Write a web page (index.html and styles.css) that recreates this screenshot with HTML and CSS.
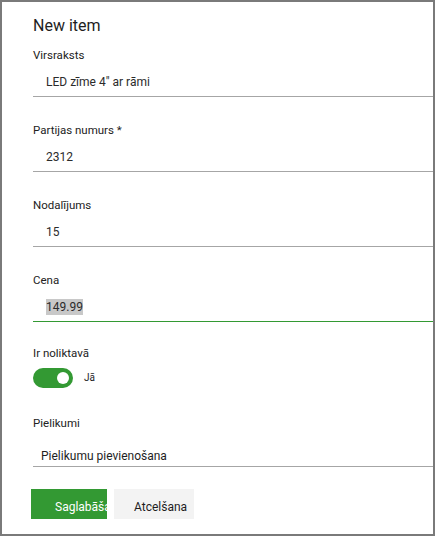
FILE: index.html
```html
<!DOCTYPE html>
<html lang="lv">
<head>
<meta charset="utf-8">
<title>New item</title>
<link rel="stylesheet" href="styles.css">
</head>
<body>
<div class="panel">
  <h1 class="title">New item</h1>

  <div class="field first">
    <div class="label">Virsraksts</div>
    <div class="value">LED zīme 4" ar rāmi</div>
  </div>

  <div class="field">
    <div class="label">Partijas numurs *</div>
    <div class="value">2312</div>
  </div>

  <div class="field">
    <div class="label">Nodalījums</div>
    <div class="value">15</div>
  </div>

  <div class="field focused">
    <div class="label">Cena</div>
    <div class="value"><span class="selected">149.99</span></div>
  </div>

  <div class="toggle-field">
    <div class="label">Ir noliktavā</div>
    <div class="toggle-row">
      <span class="toggle"><span class="knob"></span></span>
      <span class="toggle-text">Jā</span>
    </div>
  </div>

  <div class="field attach">
    <div class="label">Pielikumi</div>
    <div class="value">Pielikumu pievienošana</div>
  </div>

  <div class="actions">
    <button class="btn primary">Saglabāšana</button>
    <button class="btn secondary">Atcelšana</button>
  </div>
</div>
</body>
</html>
```

FILE: styles.css
```css
html, body {
  margin: 0;
  padding: 0;
  background: #ffffff;
}

body {
  font-family: Roboto, "Liberation Sans", Arial, sans-serif;
  color: #252525;
}

.panel {
  box-sizing: border-box;
  width: 435px;
  height: 536px;
  border: 2px solid #7a7a7a;
  padding: 12.5px 0 0 31px;
  overflow: hidden;
}

.title {
  margin: 0;
  font-size: 16px;
  line-height: 22px;
  font-weight: 400;
  color: #1e1e1e;
}

.field {
  padding-top: 25px;
  border-bottom: 1px solid #a6a6a6;
}

.field.first {
  padding-top: 10.5px;
}

.field.focused {
  border-bottom-color: #339933;
}

.label {
  font-size: 11.5px;
  line-height: 16px;
  color: #222222;
  margin-bottom: 9px;
}

.value {
  font-size: 12px;
  line-height: 20px;
  padding: 0 0 4px 13px;
  color: #2b2b2b;
}

.selected {
  display: inline-block;
  background: #c8c8c8;
  line-height: 16px;
}

.toggle-field {
  padding-top: 22.5px;
}

.toggle-field .label {
  margin-bottom: 7px;
}

.toggle-row {
  display: flex;
  align-items: center;
  height: 20px;
}

.toggle {
  position: relative;
  display: block;
  width: 40px;
  height: 20px;
  border-radius: 10px;
  background: #339933;
}

.knob {
  position: absolute;
  top: 4px;
  right: 4px;
  width: 12px;
  height: 12px;
  border-radius: 50%;
  background: #ffffff;
}

.toggle-text {
  margin-left: 11px;
  font-size: 10px;
  color: #1e1e1e;
}

.field.attach {
  padding-top: 27.5px;
}

.field.attach .label {
  margin-bottom: 15px;
}

.field.attach .value {
  padding: 0 0 0 8px;
  color: #1e1e1e;
}

.actions {
  display: flex;
  gap: 7px;
  margin: 22px 0 0 -2px;
}

.btn {
  box-sizing: border-box;
  height: 30px;
  border: none;
  border-radius: 0;
  margin: 0;
  padding: 6px 0 0 0;
  font-family: Roboto, "Liberation Sans", Arial, sans-serif;
  font-size: 12px;
  line-height: 24px;
  text-align: left;
  white-space: nowrap;
  overflow: visible;
  vertical-align: top;
}

.btn.primary {
  width: 76px;
  padding-left: 24px;
  background: #339933;
  color: #ffffff;
}

.btn.secondary {
  width: 80px;
  padding-left: 20px;
  background: #f3f3f3;
  color: #1e1e1e;
}
```
